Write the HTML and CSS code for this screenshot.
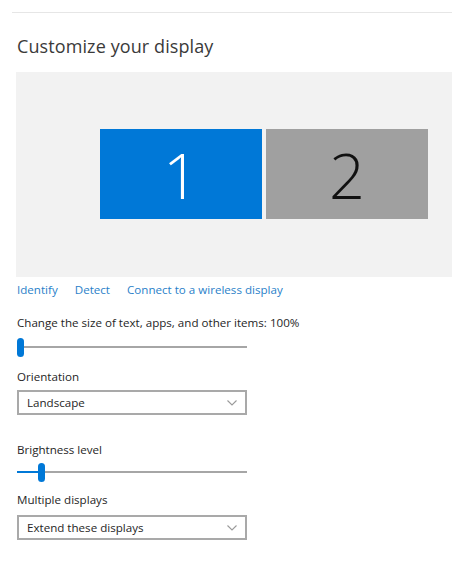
FILE: index.html
```html
<!DOCTYPE html>
<html lang="en">
<head>
<meta charset="utf-8">
<title>Display settings</title>
<link rel="stylesheet" href="styles.css">
</head>
<body>
<div class="page">
  <div class="rule"></div>
  <h1 class="title">Customize your display</h1>
  <div class="panel">
    <div class="monitors">
      <div class="monitor primary">1</div>
      <div class="monitor secondary">2</div>
    </div>
  </div>
  <div class="links">
    <a class="link">Identify</a>
    <a class="link">Detect</a>
    <a class="link">Connect to a wireless display</a>
  </div>
  <div class="label first">Change the size of text, apps, and other items: 100%</div>
  <div class="slider">
    <div class="fill" style="width:0px"></div>
    <div class="thumb"></div>
    <div class="track"></div>
  </div>
  <div class="label">Orientation</div>
  <div class="select">
    <span>Landscape</span>
    <svg class="chev" width="10" height="6" viewBox="0 0 10 6"><path d="M0.5 0.5 L5 5 L9.5 0.5" fill="none" stroke="#9a9a9a" stroke-width="1.1"/></svg>
  </div>
  <div class="label gapped">Brightness level</div>
  <div class="slider near">
    <div class="fill" style="width:21px"></div>
    <div class="thumb"></div>
    <div class="track"></div>
  </div>
  <div class="label multi">Multiple displays</div>
  <div class="select lower">
    <span>Extend these displays</span>
    <svg class="chev" width="10" height="6" viewBox="0 0 10 6"><path d="M0.5 0.5 L5 5 L9.5 0.5" fill="none" stroke="#9a9a9a" stroke-width="1.1"/></svg>
  </div>
</div>
</body>
</html>
```
FILE: styles.css
```css
html, body {
  margin: 0;
  padding: 0;
  background: #ffffff;
}
body {
  font-family: "Open Sans", "Noto Sans", sans-serif;
  color: #222222;
  width: 470px;
  height: 574px;
  overflow: hidden;
}
.page {
  padding: 12px 18px 0 16px;
}
.rule {
  height: 1px;
  background: #e6e6e6;
  margin-left: -4px;
}
.title {
  margin: 21px 0 0 1px;
  font-size: 18px;
  font-weight: 400;
  line-height: 24px;
  color: #3a3a3a;
  letter-spacing: 0.1px;
}
.panel {
  margin-top: 14px;
  width: 436px;
  height: 205px;
  background: #f2f2f2;
  padding-top: 57px;
  padding-left: 84px;
  box-sizing: border-box;
}
.monitors {
  display: flex;
  gap: 4px;
}
.monitor {
  width: 162px;
  height: 90px;
  display: flex;
  align-items: center;
  justify-content: center;
  font-family: "Open Sans", sans-serif;
  font-weight: 300;
  font-size: 63px;
  line-height: 1;
}
.primary {
  background: #0078d7;
  color: #ffffff;
}
.secondary {
  background: #a0a0a0;
  color: #111111;
}
.links {
  display: flex;
  gap: 17px;
  margin: 5px 0 0 1px;
  font-size: 11.6px;
  line-height: 16px;
}
.link {
  color: #2a7fc9;
}
.label {
  margin: 12px 0 0 1px;
  font-size: 11.6px;
  line-height: 16px;
  color: #262626;
}
.label.first {
  margin-top: 17px;
}
.label.gapped {
  margin-top: 27px;
}
.label.multi {
  margin-top: 10px;
}
.slider {
  position: relative;
  width: 230px;
  height: 20px;
  margin: 6px 0 0 1px;
  display: flex;
  align-items: center;
}
.slider.near {
  margin-top: 4px;
}
.track {
  flex: 1;
  height: 2px;
  background: #a6a6a6;
}
.fill {
  height: 2px;
  background: #0078d7;
}
.thumb {
  width: 7px;
  height: 19px;
  border-radius: 4px;
  background: #0078d7;
  flex: none;
}
.select {
  margin: 5px 0 0 1px;
  width: 230px;
  height: 25px;
  box-sizing: border-box;
  border: 2px solid #a9a9a9;
  display: flex;
  align-items: center;
  justify-content: space-between;
  padding: 0 8px 0 8px;
  font-size: 11.6px;
  color: #262626;
}
.select.lower {
  margin-top: 7px;
}
.chev {
  display: block;
}
```
